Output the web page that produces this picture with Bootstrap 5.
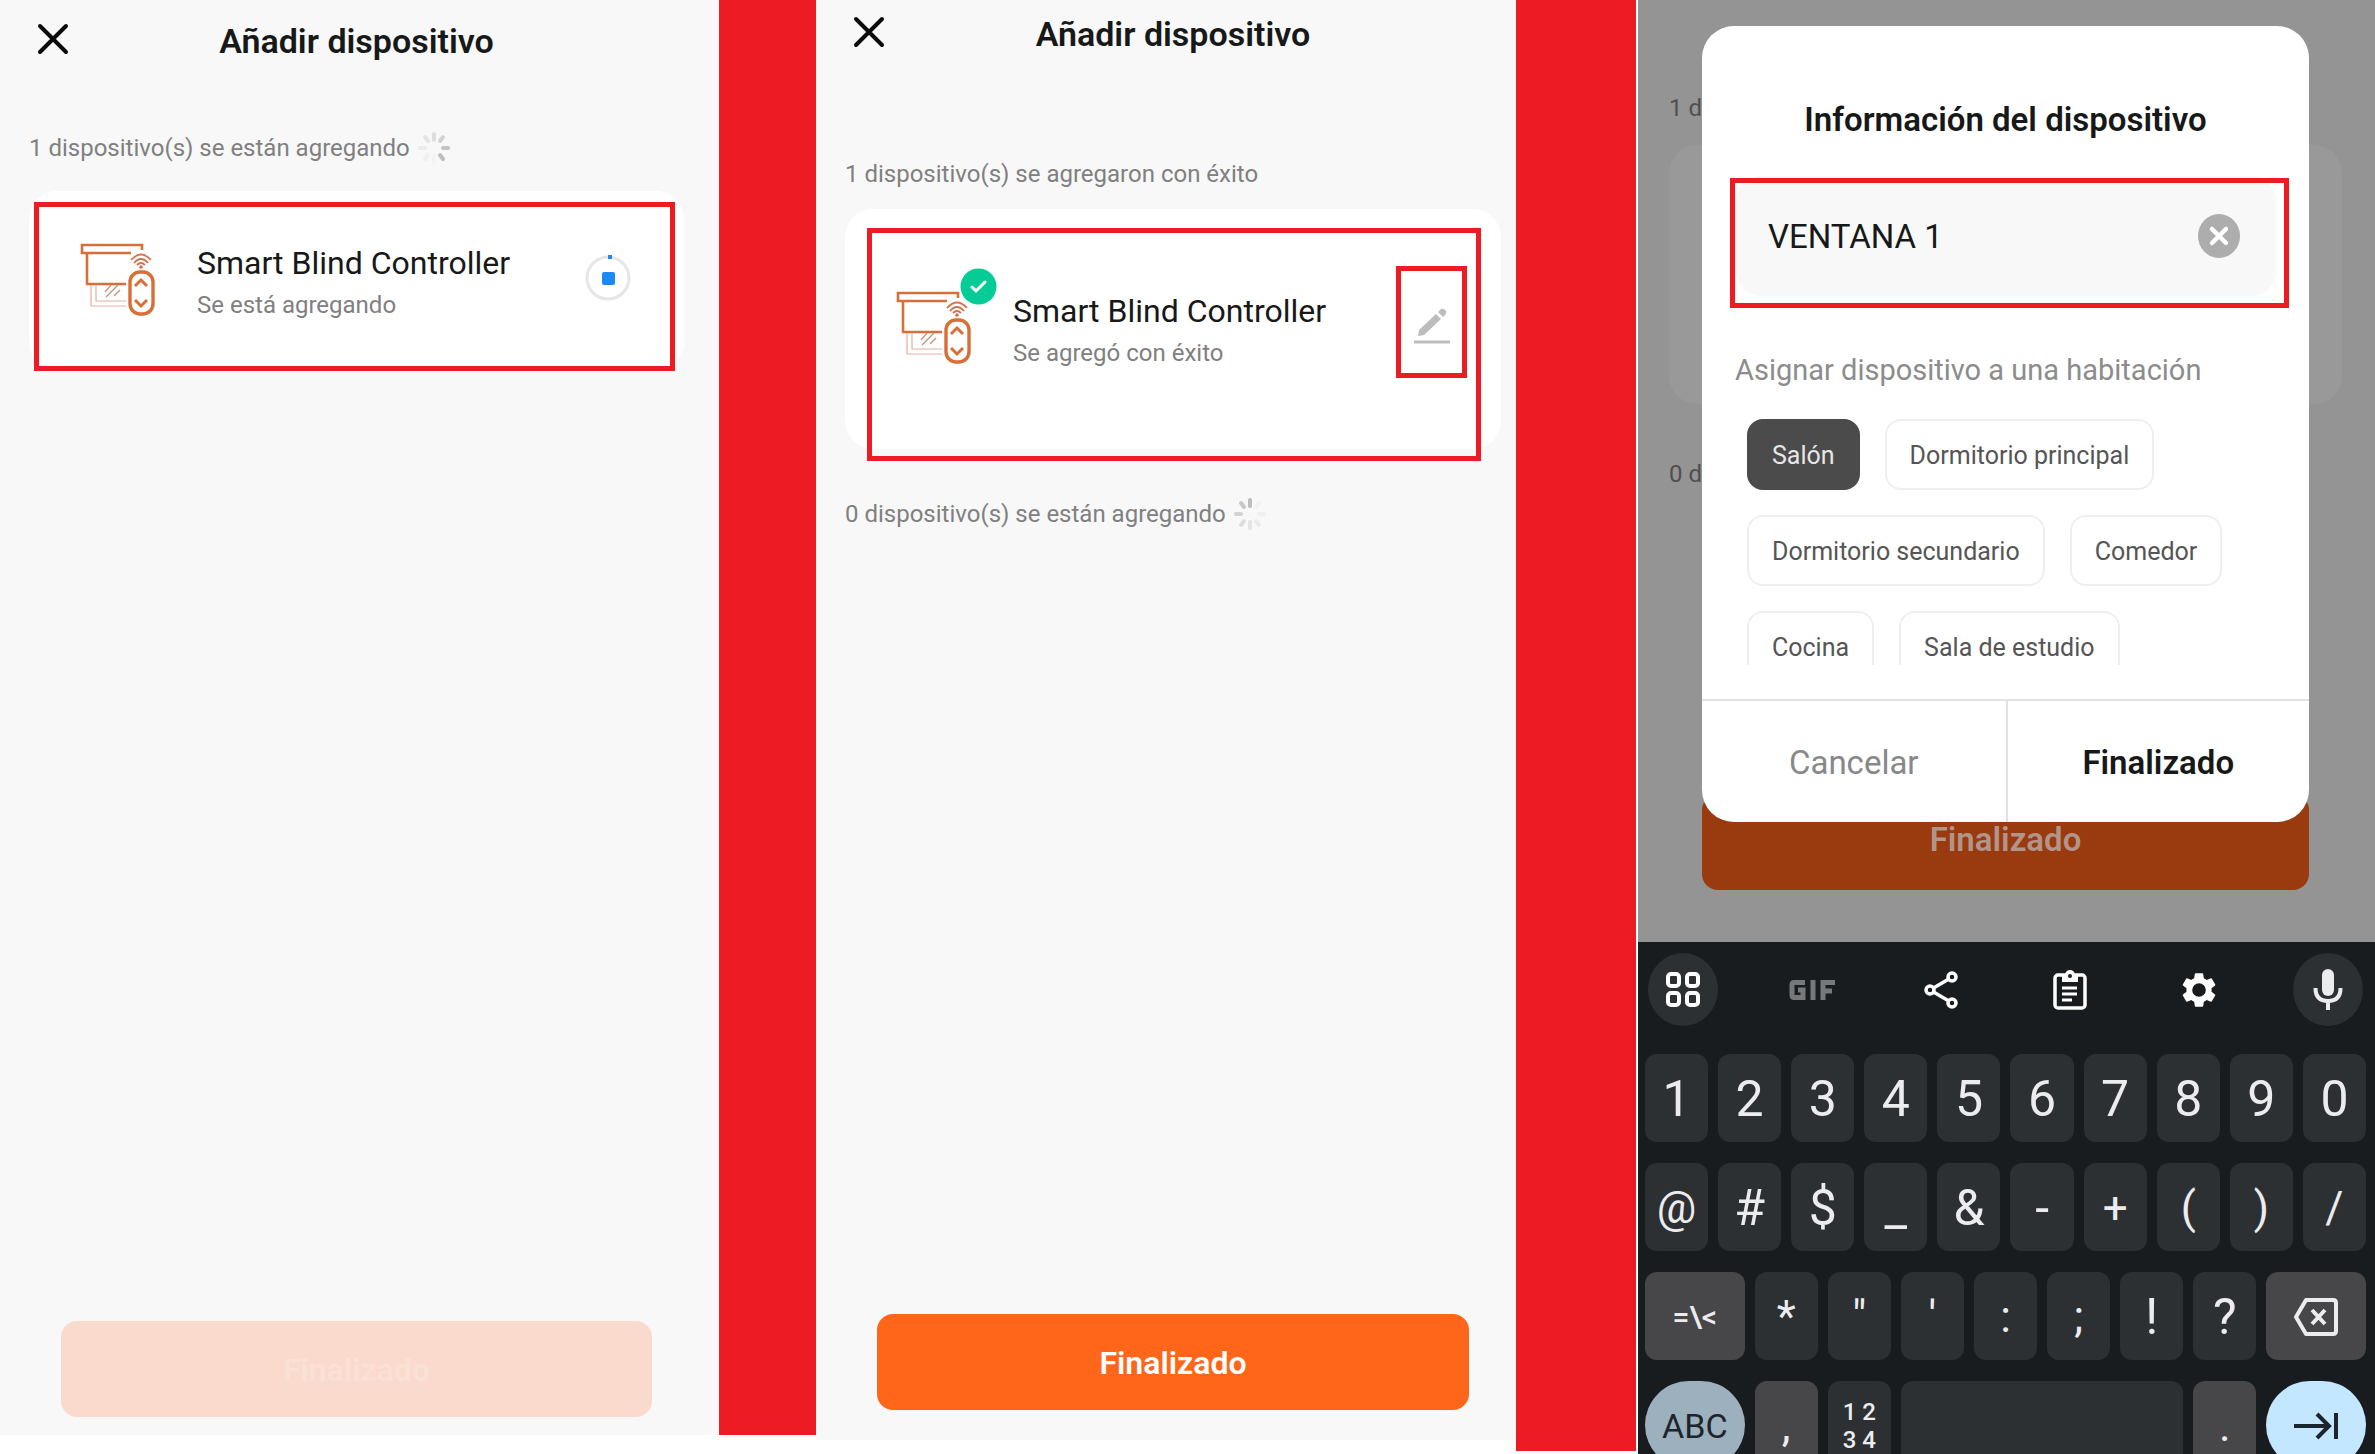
<!DOCTYPE html>
<html lang="es">
<head>
<meta charset="utf-8">
<meta name="viewport" content="width=device-width, initial-scale=1">
<title>Añadir dispositivo</title>
<link href="https://cdn.jsdelivr.net/npm/bootstrap@5.3.0/dist/css/bootstrap.min.css" rel="stylesheet">
<style>
  :root { --mark-red: #ed1c24; --ink: #171818; --muted: #808080; --brand: #ff661a; }
  body { font-family: Roboto, "Liberation Sans", sans-serif; color: var(--ink); background: #fff; }
  svg { display: block; flex: none; }
  button { font-family: inherit; }
  .board { display: grid; grid-template-columns: minmax(0, 719fr) minmax(0, 97fr) minmax(0, 700fr) minmax(0, 120fr) 2px minmax(0, 737fr); }
  .strip { background: var(--mark-red); }
  .phone { background: #f8f8f8; }
  .phone-a { padding: 0 35px 18px 29px; margin-bottom: 19px; }
  .phone-b { padding: 0 15px 30px 29px; margin-bottom: 14px; }
  .strip-a { margin-bottom: 19px; }
  .strip-b { margin-bottom: 3px; }

  .top-line { height: 78px; }
  .phone-b .top-line { height: 64px; }
  .top-line h1 { font-size: 34px; line-height: 40px; font-weight: 600; padding-top: 3px; }
  .close-btn { width: 32px; height: 32px; left: 8px; }
  .plain-btn { border: 0; background: none; padding: 0; }
  .status-text { font-size: 24px; line-height: 32px; color: var(--muted); gap: 8px; }
  .status-a { margin-top: 54px; }
  .status-b { margin-top: 94px; }
  .status-c { margin-top: 49px; }

  .device { background: #fff; border-radius: 28px; }
  .phone-a .device { height: 179px; margin-top: 27px; padding: 48px 53px 0 48px; }
  .phone-b .device { height: 240px; margin-top: 19px; padding: 78px 52px 0 48px; }
  .device-name { font-size: 32px; line-height: 40px; }
  .device-sub { font-size: 24px; line-height: 32px; margin-top: 6px; color: var(--muted); }
  .device-art { margin-right: 37px; }
  .outline { border: 5px solid var(--mark-red); pointer-events: none; }
  .outline-a { inset: 11px 9px -1px 5px; }
  .outline-b { inset: 19px 20px -12px 22px; }
  .outline-input { inset: 2px -13px -12px -6px; }
  .edit-box { width: 71px; height: 112px; right: 34px; top: 57px; border: 5px solid var(--mark-red); }
  .ok-badge { left: 115px; top: 59px; }

  .done-btn { height: 96px; border-radius: 16px; font-size: 32px; font-weight: 600; color: #fff; background: var(--brand); border: 0; margin: 0 32px; padding: 2px 0 0; }
  .done-btn:disabled { background: #fadacc; color: #fae1d6; opacity: 1; }

  .phone-c { background: #949494; }
  .scene { height: 942px; padding: 26px 66px 0 64px; }
  .dim-text { left: 31px; font-size: 24px; line-height: 32px; color: #4f4f4f; }
  .dim-top { top: 92px; }
  .dim-low { top: 458px; }
  .dim-card { inset: 145px 33px 538px 31px; background: #999; border-radius: 28px; }
  .dim-done { left: 64px; right: 66px; bottom: 52px; height: 96px; border-radius: 16px; background: #993a0f; color: #b39488; font-size: 33px; font-weight: 600; border: 0; padding: 0 0 5px; }
  .sheet { height: 796px; background: #fff; border-radius: 32px; overflow: hidden; }
  .sheet h2 { font-size: 33px; line-height: 40px; font-weight: 600; margin: 74px 0 0; }
  .name-field { height: 120px; margin: 36px 33px 0 34px; background: #f8f8f8; border-radius: 24px; padding: 0 36px 0 32px; }
  .name-field input { border: 0; background: none; font-size: 33px; color: var(--ink); outline: 0; min-width: 0; padding: 2px 0 0; }
  .room-label { font-size: 29px; line-height: 36px; color: #8c8c8c; margin: 56px 0 0 33px; }
  .rooms { height: 246px; margin: 31px 45px 0; gap: 25px; overflow: hidden; align-content: flex-start; }
  .room-btn { height: 71px; padding: 2px 23px 0; border: 2px solid #efefef; border-radius: 16px; background: #fff; color: #555; font-size: 25px; }
  .room-btn.chosen { background: #4b4b4b; border-color: #4b4b4b; color: #e6e6e6; }
  .actions { border-top: 2px solid #e2e2e2; margin-top: 34px; }
  .actions button { font-size: 33px; padding-top: 3px; }
  .action-cancel { color: #888; }
  .actions button + button { border-left: 2px solid #e2e2e2; font-weight: 600; color: var(--ink); }

  .keyboard { background: #191c1f; color: #ececef; padding: 11px 9px 0 7px; }
  .tools { height: 73px; padding: 0 3px; margin-bottom: 28px; }
  .tool { width: 70px; height: 73px; color: #fff; }
  .tool-round { background: #2d3033; border-radius: 50%; }
  .keys { display: grid; grid-template-columns: repeat(20, minmax(0, 1fr)); gap: 21px 10px; }
  .key { height: 88px; grid-column: span 2; border: 0; padding: 2px 0 0; border-radius: 12px; background: #2d3033; color: #ececef; font-size: 50px; line-height: 86px; }
  .key-wide { grid-column: span 3; }
  .key-soft { background: #474749; }
  .key-space { grid-column: span 8; }
  .key-small { font-size: 30px; font-weight: 500; }
  .key-quad { font-size: 24px; line-height: 28px; font-weight: 500; }
  .key-sym { font-size: 44px; }
  .key-abc { background: #9db0be; color: #1c252c; border-radius: 44px; font-size: 34px; }
  .key-go { background: #c2e7ff; color: #1c252c; border-radius: 44px; }
</style>
</head>
<body>
<svg width="0" height="0" class="position-absolute" aria-hidden="true">
  <symbol id="cross" viewBox="0 0 32 32"><path d="M3 3L29 29M29 3L3 29" fill="none" stroke="#0a0a0a" stroke-width="4" stroke-linecap="round"/></symbol>
  <symbol id="blind" viewBox="0 0 76 74">
    <g fill="none" stroke="#d96f38">
      <path d="M62 7V2H2V10H51M7 11V41H46" stroke-width="2.6"/>
      <path d="M11 42V63H46M16 42V58H46" stroke="#e3b09a" stroke-width="1.2"/>
      <path d="M25 49L31 42M26 54L38 42M34 53L40 47" stroke="#c98d70" stroke-width="1.2"/>
      <path d="M51 17Q61 6 71 17M54 20Q61 12 68 20M57 22Q61 18 65 22" stroke="#cf7350" stroke-width="1.8"/>
      <rect x="50" y="29" width="23" height="42" rx="10" stroke-width="3.4"/>
      <path d="M55 43L61 37L67 43M55 57L61 63L67 57" stroke-width="3"/>
    </g>
    <circle cx="61" cy="24" r="1.8" fill="#d96f38"/>
  </symbol>
</svg>

<main class="board vh-100 overflow-hidden">
  <section class="phone phone-a d-flex flex-column">
    <header class="top-line position-relative d-flex align-items-center justify-content-center">
      <button class="plain-btn close-btn position-absolute" aria-label="Cerrar"><svg width="32" height="32"><use href="#cross"/></svg></button>
      <h1 class="m-0">Añadir dispositivo</h1>
    </header>
    <div class="status-text status-a d-flex align-items-center">
      <span>1 dispositivo(s) se están agregando</span>
      <svg width="32" height="32" viewBox="-16 -16 32 32" stroke-width="4" stroke-linecap="round">
        <path d="M0-8V-14" stroke="#ddd"/><path d="M6-7L9-11" stroke="#d2d2d2"/><path d="M9 0H14" stroke="#c4c4c4"/><path d="M6 7L9 11" stroke="#bdbdbd"/><path d="M0 8V14" stroke="#f3f3f3"/><path d="M-6 7L-9 11" stroke="#efefef"/><path d="M-9 0H-14" stroke="#eaeaea"/><path d="M-6-7L-9-11" stroke="#e4e4e4"/>
      </svg>
    </div>
    <article class="device position-relative d-flex align-items-start">
      <svg class="device-art mt-1" width="83" height="76" viewBox="-3 0 83 76" aria-hidden="true"><use href="#blind" width="76" height="74"/></svg>
      <div class="flex-grow-1 pt-1">
        <div class="device-name">Smart Blind Controller</div>
        <div class="device-sub">Se está agregando</div>
      </div>
      <svg class="mt-3" width="46" height="46" viewBox="0 0 46 46" role="img" aria-label="Agregando">
        <circle cx="23" cy="23" r="21" fill="none" stroke="#e6e6e6" stroke-width="3"/>
        <path d="M23 2H27" stroke="#1e88f5" stroke-width="4"/>
        <rect x="17" y="17" width="13" height="13" rx="2" fill="#1e88f5"/>
      </svg>
      <div class="outline outline-a position-absolute"></div>
    </article>
    <button class="done-btn mt-auto" disabled>Finalizado</button>
  </section>
  <div class="strip strip-a"></div>

  <section class="phone phone-b d-flex flex-column">
    <header class="top-line position-relative d-flex align-items-center justify-content-center">
      <button class="plain-btn close-btn position-absolute" aria-label="Cerrar"><svg width="32" height="32"><use href="#cross"/></svg></button>
      <h1 class="m-0">Añadir dispositivo</h1>
    </header>
    <div class="status-text status-b">1 dispositivo(s) se agregaron con éxito</div>
    <article class="device position-relative d-flex align-items-start">
      <svg class="device-art mt-1" width="83" height="76" viewBox="-3 0 83 76" aria-hidden="true"><use href="#blind" width="76" height="74"/></svg>
      <svg class="ok-badge position-absolute" width="37" height="37" viewBox="0 0 37 37" role="img" aria-label="Agregado">
        <circle cx="18.500" cy="18.500" r="18" fill="#05cc97"/><path d="M12 19L16 23L25 14" fill="none" stroke="#fff" stroke-width="3" stroke-linecap="round" stroke-linejoin="round"/>
      </svg>
      <div class="flex-grow-1 pt-1">
        <div class="device-name">Smart Blind Controller</div>
        <div class="device-sub">Se agregó con éxito</div>
      </div>
      <div class="outline outline-b position-absolute"></div>
      <button class="plain-btn edit-box position-absolute d-flex align-items-center justify-content-center" aria-label="Editar">
        <svg class="mt-2" width="36" height="36" viewBox="0 0 36 36"><path d="M4 28L5 22L22 6L27 11L10 27Z" fill="#bdbdbd"/><path d="M24 4L27 1Q30 0 32 3Q33 5 31 7L29 9Z" fill="#bdbdbd"/><path d="M0 34H36" stroke="#bdbdbd" stroke-width="3"/></svg>
      </button>
    </article>
    <div class="status-text status-c d-flex align-items-center">
      <span>0 dispositivo(s) se están agregando</span>
      <svg width="32" height="32" viewBox="-16 -16 32 32" stroke-width="4" stroke-linecap="round">
        <path d="M0-8V-14" stroke="#bdbdbd"/><path d="M6-7L9-11" stroke="#f2f2f2"/><path d="M9 0H14" stroke="#efefef"/><path d="M6 7L9 11" stroke="#eaeaea"/><path d="M0 8V14" stroke="#e4e4e4"/><path d="M-6 7L-9 11" stroke="#ddd"/><path d="M-9 0H-14" stroke="#d2d2d2"/><path d="M-6-7L-9-11" stroke="#c8c8c8"/>
      </svg>
    </div>
    <button class="done-btn mt-auto">Finalizado</button>
  </section>
  <div class="strip strip-b"></div>
  <div></div>

  <section class="phone-c d-flex flex-column overflow-hidden">
    <div class="scene position-relative flex-shrink-0">
      <div class="dim-text dim-top position-absolute">1 d</div>
      <div class="dim-card position-absolute"></div>
      <div class="dim-text dim-low position-absolute">0 d</div>
      <button class="dim-done position-absolute" tabindex="-1">Finalizado</button>
      <form class="sheet position-relative d-flex flex-column" role="dialog" aria-labelledby="sheet-title">
        <h2 id="sheet-title" class="text-center">Información del dispositivo</h2>
        <div class="name-field position-relative d-flex align-items-center">
          <input class="flex-grow-1" type="text" value="VENTANA 1" aria-label="Nombre del dispositivo">
          <button type="button" class="plain-btn" aria-label="Borrar">
            <svg width="42" height="44" viewBox="0 0 42 44"><ellipse cx="21" cy="22" rx="21" ry="22" fill="#adadad"/><path d="M14 15L28 29M28 15L14 29" stroke="#fff" stroke-width="4.500" stroke-linecap="round"/></svg>
          </button>
          <div class="outline outline-input position-absolute"></div>
        </div>
        <div class="room-label">Asignar dispositivo a una habitación</div>
        <div class="rooms d-flex flex-wrap flex-shrink-0">
          <button type="button" class="room-btn chosen" aria-pressed="true">Salón</button>
          <button type="button" class="room-btn">Dormitorio principal</button>
          <button type="button" class="room-btn">Dormitorio secundario</button>
          <button type="button" class="room-btn">Comedor</button>
          <button type="button" class="room-btn">Cocina</button>
          <button type="button" class="room-btn">Sala de estudio</button>
        </div>
        <div class="actions d-flex flex-grow-1">
          <button type="button" class="plain-btn action-cancel w-50">Cancelar</button>
          <button type="button" class="plain-btn w-50">Finalizado</button>
        </div>
      </form>
    </div>

    <div class="keyboard flex-grow-1">
      <div class="tools d-flex justify-content-between align-items-center">
        <button class="plain-btn tool tool-round d-flex align-items-center justify-content-center" aria-label="Menú"><svg width="36" height="36" fill="none" stroke="currentColor" stroke-width="4"><rect x="3" y="2" width="11" height="12" rx="3"/><rect x="22" y="2" width="11" height="12" rx="3"/><rect x="3" y="21" width="11" height="12" rx="3"/><rect x="22" y="21" width="11" height="12" rx="3"/></svg></button>
        <button class="plain-btn tool" aria-label="GIF"><svg class="mx-auto" width="46" height="22" fill="none" stroke="#77787a" stroke-width="5"><path d="M16 3.500H5Q3 3.500 3 6V16Q3 18.500 5 18.500H14V11H9M24 1V21M34 21V3.500H46M34 12H43"/></svg></button>
        <button class="plain-btn tool" aria-label="Compartir"><svg class="mx-auto" width="34" height="38" fill="none" stroke="currentColor" stroke-width="3.500"><circle cx="28" cy="6" r="4"/><circle cx="6" cy="19" r="4"/><circle cx="28" cy="32" r="4"/><path d="M9.500 17L24 8.500M9.500 21L24 29.500"/></svg></button>
        <button class="plain-btn tool" aria-label="Portapapeles"><svg class="mx-auto" width="34" height="40" fill="none" stroke="currentColor" stroke-width="3.500"><rect x="2" y="5" width="30" height="33" rx="3"/><path d="M9 18H24M9 24H24M9 30H19" stroke-width="3"/><path d="M9 5H25V12H9Z" fill="currentColor" stroke="none"/><circle cx="17" cy="5" r="5" fill="currentColor" stroke="none"/><circle cx="17" cy="6" r="2" fill="#191c1f" stroke="none"/></svg></button>
        <button class="plain-btn tool" aria-label="Ajustes"><svg class="mx-auto" width="42" height="44" viewBox="0 0 24 24"><path fill="currentColor" d="M19.140 12.940c.04-.3.060-.61.060-.94 0-.32-.02-.64-.07-.94l2.030-1.580a.49.490 0 0 0 .12-.61l-1.920-3.320a.49.490 0 0 0-.59-.22l-2.390.96a7 7 0 0 0-1.620-.94l-.36-2.540a.48.480 0 0 0-.48-.41h-3.840a.48.480 0 0 0-.47.410l-.36 2.540c-.59.240-1.130.570-1.620.94l-2.390-.96a.48.480 0 0 0-.59.220L2.740 8.870a.48.480 0 0 0 .12.610l2.030 1.580c-.05.300-.09.630-.09.940s.02.640.07.940l-2.030 1.580a.49.490 0 0 0-.12.610l1.920 3.320c.12.220.370.290.590.220l2.390-.96c.500.380 1.030.700 1.620.94l.36 2.540c.05.240.24.410.480.410h3.840c.24 0 .44-.17.470-.41l.36-2.540a7 7 0 0 0 1.620-.94l2.390.96c.22.080.470 0 .59-.22l1.920-3.320a.48.480 0 0 0-.12-.61zM12 15.900a3.900 3.900 0 1 1 0-7.800 3.900 3.900 0 0 1 0 7.800z"/></svg></button>
        <button class="plain-btn tool tool-round d-flex align-items-center justify-content-center" aria-label="Voz"><svg width="30" height="42" fill="none" stroke="#ececef" stroke-width="4"><rect x="9" y="0" width="12" height="27" rx="6" fill="#ececef" stroke="none"/><path d="M2.500 19Q2.500 32 15 32T27.500 19M15 32V41"/></svg></button>
      </div>
      <div class="keys">
        <button class="key">1</button><button class="key">2</button><button class="key">3</button><button class="key">4</button><button class="key">5</button><button class="key">6</button><button class="key">7</button><button class="key">8</button><button class="key">9</button><button class="key">0</button>
        <button class="key key-sym">@</button><button class="key">#</button><button class="key">$</button><button class="key">_</button><button class="key">&amp;</button><button class="key">-</button><button class="key key-sym">+</button><button class="key key-sym">(</button><button class="key key-sym">)</button><button class="key key-sym">/</button>
        <button class="key key-wide key-soft key-small">=\&lt;</button><button class="key key-sym">*</button><button class="key key-sym">"</button><button class="key key-sym">'</button><button class="key key-sym">:</button><button class="key key-sym">;</button><button class="key">!</button><button class="key">?</button>
        <button class="key key-wide key-soft" aria-label="Retroceso"><svg class="mx-auto" width="46" height="38" fill="none" stroke="#ececef" stroke-width="4" stroke-linejoin="round"><path d="M13 2H40Q43 2 43 5V33Q43 36 40 36H13L3 19Z"/><path d="M19 12L32 26M32 12L19 26"/></svg></button>
        <button class="key key-wide key-abc">ABC</button><button class="key key-soft key-sym">,</button><button class="key key-quad">1 2<br>3 4</button><button class="key key-space" aria-label="Espacio"></button><button class="key key-soft key-sym">.</button>
        <button class="key key-wide key-go" aria-label="Siguiente"><svg class="mx-auto" width="46" height="28" fill="none" stroke="currentColor" stroke-width="4"><path d="M1 14H36M24 2L36 14L24 26M43 1V27"/></svg></button>
      </div>
    </div>
  </section>
</main>
<script src="https://cdn.jsdelivr.net/npm/bootstrap@5.3.0/dist/js/bootstrap.bundle.min.js"></script>
</body>
</html>
